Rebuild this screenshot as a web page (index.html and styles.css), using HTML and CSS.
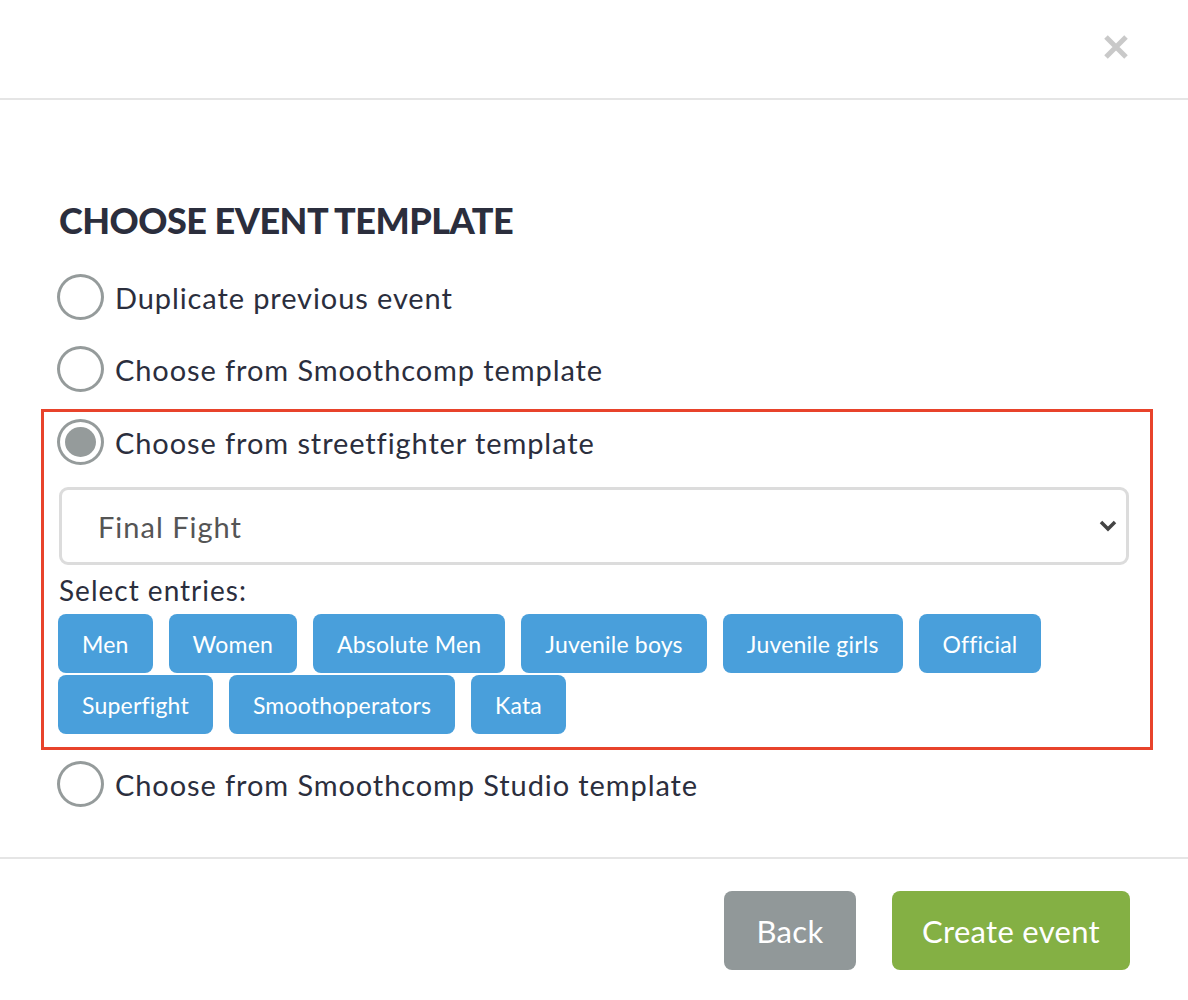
FILE: index.html
```html
<!DOCTYPE html>
<html>
<head>
<meta charset="utf-8">
<link rel="stylesheet" href="styles.css">
</head>
<body>
<div class="modal">
  <div class="modal-header">
    <svg class="close" width="26" height="26" viewBox="0 0 26 26"><path d="M3 3 L23 23 M23 3 L3 23" stroke="#c9c9c9" stroke-width="5" fill="none"/></svg>
  </div>
  <div class="modal-body">
    <h2 class="title">CHOOSE EVENT TEMPLATE</h2>
    <label class="option"><span class="radio"></span><span class="option-text">Duplicate previous event</span></label>
    <label class="option"><span class="radio"></span><span class="option-text">Choose from Smoothcomp template</span></label>
    <div class="selected-box">
      <label class="option option-in"><span class="radio checked"></span><span class="option-text">Choose from streetfighter template</span></label>
      <div class="select">
        <span class="select-value">Final Fight</span>
        <svg class="chevron" width="20" height="14" viewBox="0 0 20 14"><path d="M3 3 L10 10 L17 3" fill="none" stroke="#444" stroke-width="3.5"/></svg>
      </div>
      <div class="entries-label">Select entries:</div>
      <div class="tags">
        <span class="tag">Men</span>
        <span class="tag">Women</span>
        <span class="tag">Absolute Men</span>
        <span class="tag">Juvenile boys</span>
        <span class="tag">Juvenile girls</span>
        <span class="tag">Official</span>
        <span class="tag">Superfight</span>
        <span class="tag">Smoothoperators</span>
        <span class="tag">Kata</span>
      </div>
    </div>
    <label class="option option-last"><span class="radio"></span><span class="option-text">Choose from Smoothcomp Studio template</span></label>
  </div>
  <div class="modal-footer">
    <button class="btn btn-back">Back</button>
    <button class="btn btn-create">Create event</button>
  </div>
</div>
</body>
</html>
```

FILE: styles.css
```css
* { box-sizing: border-box; }
body {
  margin: 0;
  background: #fff;
  font-family: "Lato", "Noto Sans", sans-serif;
  color: #2b2e3d;
}
.modal-header {
  height: 100px;
  border-bottom: 2px solid #e5e5e5;
  display: flex;
  justify-content: flex-end;
  align-items: flex-start;
  padding: 34px 59px 0 0;
}
.close {
  display: block;
}
.modal-body {
  padding: 96px 59px 50px 59px;
}
.title {
  margin: 0 0 30px 0;
  font-size: 36px;
  font-weight: 900;
  line-height: 48px;
  letter-spacing: -0.5px;
}
.option {
  display: flex;
  align-items: center;
  gap: 11px;
  height: 46px;
  margin-bottom: 26px;
  margin-left: -2px;
}
.radio {
  width: 47px;
  height: 46px;
  border: 3px solid #959b9b;
  border-radius: 50%;
  flex: none;
  position: relative;
}
.radio.checked::after {
  content: "";
  position: absolute;
  left: 5px; top: 5px; right: 5px; bottom: 5px;
  border-radius: 50%;
  background: #959b9b;
}
.option-text {
  font-size: 29px;
  font-weight: 400;
  letter-spacing: 0.9px;
}
.selected-box {
  border: 3px solid #e8432b;
  margin: -9px -24px 0 -18px;
  padding: 7px 21px 13px 15px;
}
.option-in {
  margin-bottom: 22px;
}
.select {
  height: 78px;
  border: 3px solid #dcdcdc;
  border-radius: 9px;
  display: flex;
  align-items: center;
  justify-content: space-between;
  padding: 0 8px 0 36px;
}
.select-value {
  font-size: 29px;
  letter-spacing: 1px;
  color: #555;
}
.entries-label {
  font-size: 28px;
  letter-spacing: 1px;
  line-height: 30px;
  padding: 10px 0 9px 0;
}
.tags {
  display: flex;
  flex-wrap: wrap;
  column-gap: 16px;
  row-gap: 2px;
  margin-left: -1px;
}
.tag {
  background: #499fdb;
  color: #fff;
  height: 59px;
  border-radius: 8px;
  padding: 0 24px;
  display: flex;
  align-items: center;
  font-size: 23px;
  letter-spacing: 0.2px;
}
.option-last {
  margin-top: 11px;
  margin-bottom: 0;
}
.modal-footer {
  border-top: 2px solid #e5e5e5;
  display: flex;
  justify-content: flex-end;
  gap: 36px;
  padding: 32px 58px 0 0;
}
.btn {
  border: none;
  border-radius: 8px;
  height: 79px;
  color: #fff;
  font-family: inherit;
  font-size: 31px;
  letter-spacing: 0.3px;
  padding: 0;
}
.btn-back { background: #919899; width: 132px; }
.btn-create { background: #84b044; width: 238px; }
```
